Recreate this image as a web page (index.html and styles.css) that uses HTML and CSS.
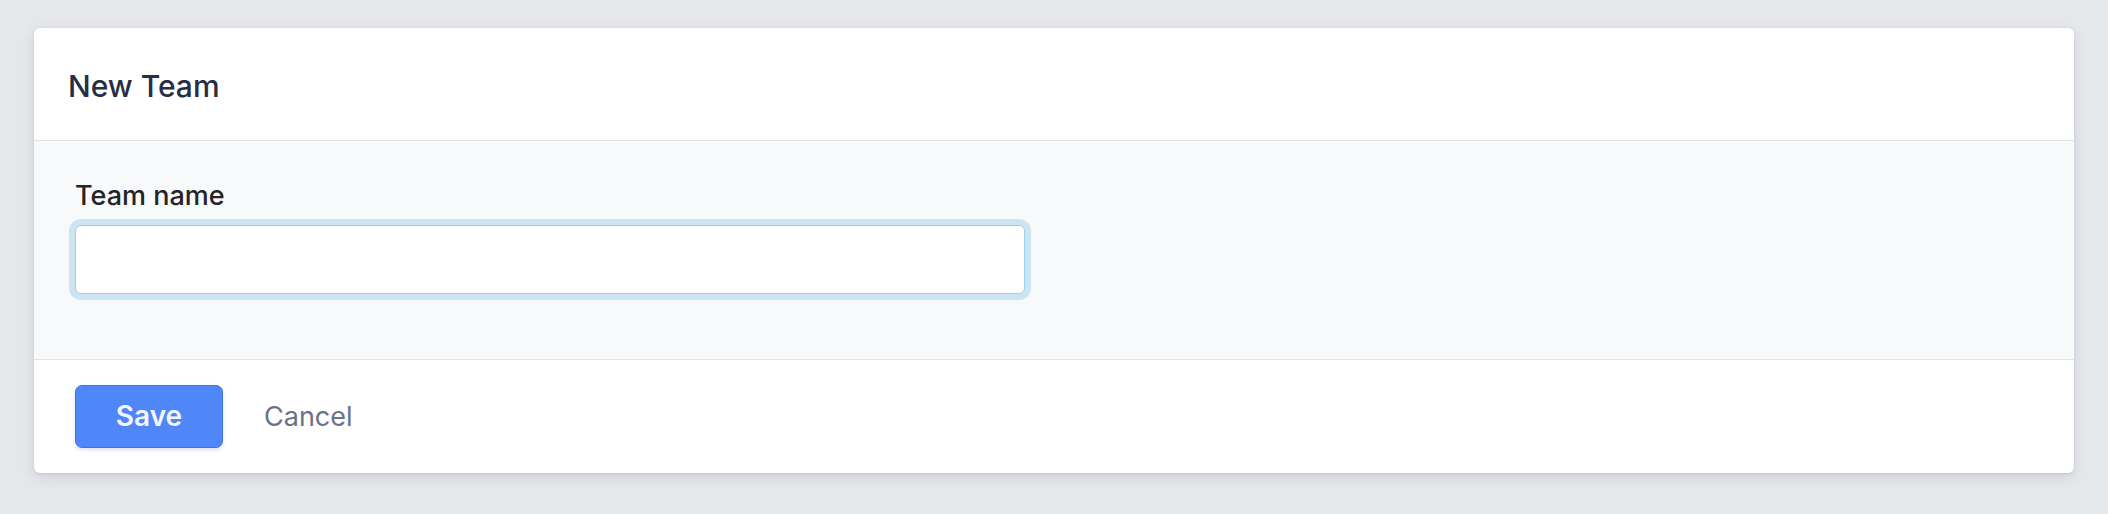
FILE: index.html
```html
<!DOCTYPE html>
<html lang="en">
<head>
<meta charset="utf-8">
<title>New Team</title>
<link rel="stylesheet" href="styles.css">
</head>
<body>
<div class="page">
  <form class="card">
    <div class="card-header">
      <h1 class="title">New Team</h1>
    </div>
    <div class="card-body">
      <label class="label" for="team-name">Team name</label>
      <input class="input" id="team-name" type="text">
    </div>
    <div class="card-footer">
      <button class="btn-primary" type="button">Save</button>
      <a class="btn-link" href="#">Cancel</a>
    </div>
  </form>
</div>
</body>
</html>
```

FILE: styles.css
```css
html, body {
  margin: 0;
  padding: 0;
  background: #e5e7eb;
  font-family: Inter, "Noto Sans", "Liberation Sans", sans-serif;
}

.page {
  padding: 28px 34px 42px 34px;
}

.card {
  display: flex;
  flex-direction: column;
  background: #ffffff;
  border-radius: 6px;
  box-shadow: 0 4px 14px rgba(30, 40, 70, 0.10), 0 1px 3px rgba(30, 40, 70, 0.10);
  overflow: hidden;
}

.card-header {
  height: 112px;
  display: flex;
  align-items: center;
  padding: 0 34px;
  border-bottom: 1px solid #e1e4ea;
}

.title {
  margin: 0;
  font-size: 30px;
  font-weight: 500;
  color: #262d45;
  padding-top: 3px;
}

.card-body {
  background: #f8f9fb;
  padding: 39px 41px 65px 41px;
  display: flex;
  flex-direction: column;
  align-items: flex-start;
}

.label {
  font-size: 27px;
  font-weight: 500;
  color: #222428;
  margin-bottom: 12px;
  line-height: 1.21;
}

.input {
  box-sizing: border-box;
  width: 950px;
  height: 69px;
  margin: 0;
  border: 1.5px solid #9bd0ea;
  border-radius: 6px;
  background: #ffffff;
  box-shadow: 0 0 0 6px #cce5f3;
  outline: none;
  font: inherit;
}

.card-footer {
  border-top: 1px solid #e1e4ea;
  padding: 25px 41px;
  display: flex;
  align-items: center;
  gap: 41px;
}

.btn-primary {
  box-sizing: border-box;
  width: 148px;
  height: 63px;
  border: 1.5px solid #4474e0;
  border-radius: 7px;
  background: #5087f8;
  color: #f3f6ff;
  font-family: inherit;
  font-size: 28px;
  font-weight: 600;
  box-shadow: 0 2px 4px rgba(30, 60, 140, 0.15);
  cursor: pointer;
}

.btn-link {
  font-size: 27px;
  color: #6b7286;
  text-decoration: none;
}
```
